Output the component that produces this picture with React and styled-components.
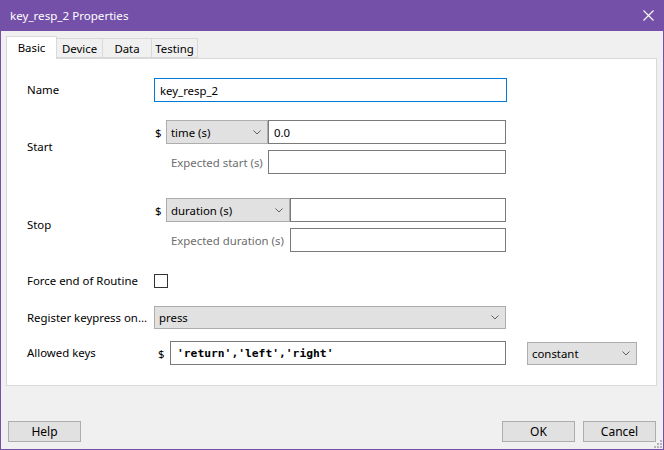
import React from "react";
import styled, { createGlobalStyle } from "styled-components";

const Global = createGlobalStyle`
  html, body { margin: 0; padding: 0; background: #f0f0f0; }
  body { font-family: "Noto Sans", "Segoe UI", sans-serif; font-size: 11.4px; color: #000; }
`;

const Window = styled.div`
  position: relative;
  width: 664px;
  height: 450px;
  box-sizing: border-box;
  display: flex;
  flex-direction: column;
  background: #f0f0f0;
  border: 1px solid #7450a8;
  border-top: none;
`;

const TitleBar = styled.div`
  height: 31px;
  margin: 0 -1px;
  background: #7450a8;
  color: #fff;
  display: flex;
  align-items: center;
  justify-content: space-between;
  padding: 0 10px 0 10px;
  font-size: 11.6px;
`;

const Body = styled.div`
  flex: 1;
  display: flex;
  flex-direction: column;
  padding: 5px 6px 0 5px;
`;

const TabBar = styled.div`
  display: flex;
  align-items: flex-end;
  height: 22px;
`;

const Tab = styled.div`
  box-sizing: border-box;
  width: ${(p) => p.$w}px;
  height: ${(p) => (p.$active ? 23 : 20)}px;
  margin-bottom: ${(p) => (p.$active ? -1 : 0)}px;
  display: flex;
  align-items: center;
  justify-content: center;
  padding-bottom: ${(p) => (p.$active ? 2 : 0)}px;
  background: ${(p) => (p.$active ? "#fff" : "#f0f0f0")};
  border: 1px solid #d9d9d9;
  border-bottom: ${(p) => (p.$active ? "none" : "1px solid #d9d9d9")};
  border-left: ${(p) => (p.$first || p.$active ? "1px solid #d9d9d9" : "none")};
  position: relative;
  z-index: ${(p) => (p.$active ? 1 : 0)};
`;

const Panel = styled.div`
  box-sizing: border-box;
  height: 328px;
  background: #fff;
  border: 1px solid #d9d9d9;
  padding: 0 0 0 20px;
  display: flex;
  flex-direction: column;
`;

const Row = styled.div`
  display: flex;
  align-items: center;
  margin-top: ${(p) => p.$top}px;
`;

const Label = styled.div`
  width: 127px;
  line-height: 14px;
  flex-shrink: 0;
  white-space: nowrap;
`;

const TextBox = styled.div`
  box-sizing: border-box;
  width: ${(p) => p.$w}px;
  height: ${(p) => p.$h || 24}px;
  border: 1px solid ${(p) => (p.$focus ? "#0078d7" : "#7a7a7a")};
  background: #fff;
  display: flex;
  align-items: center;
  padding-left: ${(p) => (p.$mono ? 6 : 5)}px;
  font-family: ${(p) => (p.$mono ? '"DejaVu Sans Mono", "Liberation Mono", monospace' : "inherit")};
  font-weight: ${(p) => (p.$mono ? 700 : 400)};
  font-size: ${(p) => (p.$mono ? "11.3px" : "11.4px")};
`;

const Combo = styled.div`
  box-sizing: border-box;
  width: ${(p) => p.$w}px;
  height: ${(p) => p.$h || 24}px;
  border: 1px solid #adadad;
  background: #e1e1e1;
  display: flex;
  align-items: center;
  justify-content: space-between;
  padding: 0 6px 0 4px;
`;

const Dollar = styled.div`
  width: ${(p) => p.$w}px;
  padding-left: ${(p) => p.$pad}px;
  box-sizing: border-box;
  flex-shrink: 0;
`;

const TimeGrid = styled.div`
  display: grid;
  grid-template-columns: 12px ${(p) => p.$combo}px ${(p) => 352 - p.$combo}px;
  grid-template-rows: 24px 24px;
  row-gap: 6px;
  align-items: center;
`;

const Hint = styled.div`
  grid-column: 2;
  color: #6d6d6d;
  padding-left: 5px;
  white-space: nowrap;
`;

const Check = styled.div`
  box-sizing: border-box;
  width: 14px;
  height: 14px;
  border: 1px solid #333;
  background: #fff;
`;

const Spacer = styled.div`
  width: ${(p) => p.$w}px;
  flex-shrink: 0;
`;

const Footer = styled.div`
  margin-top: auto;
  display: flex;
  align-items: center;
  padding: 0 1px 7px 2px;
`;

const Button = styled.div`
  box-sizing: border-box;
  width: 73px;
  height: 21px;
  border: 1px solid #adadad;
  background: #e1e1e1;
  display: flex;
  align-items: center;
  justify-content: center;
  font-size: 12px;
  margin-left: ${(p) => p.$ml || 0}px;
`;

const Grip = styled.svg`
  position: absolute;
  right: 1px;
  bottom: 1px;
`;

const Chevron = () => (
  <svg width="8" height="5" viewBox="0 0 8 5">
    <polyline points="0.5,0.5 4,4 7.5,0.5" fill="none" stroke="#606060" strokeWidth="1" />
  </svg>
);

const Select = ({ w, h, children }) => (
  <Combo $w={w} $h={h}>
    <span>{children}</span>
    <Chevron />
  </Combo>
);

const App = () => (
  <>
    <Global />
    <Window>
      <TitleBar>
        <span>key_resp_2 Properties</span>
        <svg width="11" height="11" viewBox="0 0 11 11">
          <path d="M0.5 0.5 L10.5 10.5 M10.5 0.5 L0.5 10.5" stroke="#fff" strokeWidth="1.1" />
        </svg>
      </TitleBar>
      <Body>
        <TabBar>
          <Tab $active $first $w={51}>Basic</Tab>
          <Tab $w={46}>Device</Tab>
          <Tab $w={49}>Data</Tab>
          <Tab $w={46}>Testing</Tab>
        </TabBar>
        <Panel>
          <Row $top={19}>
            <Label>Name</Label>
            <TextBox $w={353} $focus>key_resp_2</TextBox>
          </Row>
          <Row $top={18}>
            <Label>Start</Label>
            <TimeGrid $combo={102}>
              <Dollar $w={12} $pad={1}>$</Dollar>
              <Select w={102}>time (s)</Select>
              <TextBox $w={238}>0.0</TextBox>
              <Hint>Expected start (s)</Hint>
              <TextBox $w={238} />
            </TimeGrid>
          </Row>
          <Row $top={24}>
            <Label>Stop</Label>
            <TimeGrid $combo={124}>
              <Dollar $w={12} $pad={1}>$</Dollar>
              <Select w={124}>duration (s)</Select>
              <TextBox $w={216} />
              <Hint>Expected duration (s)</Hint>
              <TextBox $w={216} />
            </TimeGrid>
          </Row>
          <Row $top={22}>
            <Label>Force end of Routine</Label>
            <Check />
          </Row>
          <Row $top={18}>
            <Label>Register keypress on...</Label>
            <Select w={352} h={23}>press</Select>
          </Row>
          <Row $top={12}>
            <Label>Allowed keys</Label>
            <Dollar $w={16} $pad={4}>$</Dollar>
            <TextBox $w={336} $mono>'return','left','right'</TextBox>
            <Spacer $w={21} />
            <Select w={110} h={23}>constant</Select>
          </Row>
        </Panel>
        <Footer>
          <Button>Help</Button>
          <Button $ml={421}>OK</Button>
          <Button $ml={8}>Cancel</Button>
        </Footer>
      </Body>
      <Grip width="8" height="8" viewBox="0 0 8 8">
        <g fill="#b4b4b4">
          <rect x="6" y="0" width="2" height="2" />
          <rect x="3" y="3" width="2" height="2" />
          <rect x="6" y="3" width="2" height="2" />
          <rect x="0" y="6" width="2" height="2" />
          <rect x="3" y="6" width="2" height="2" />
          <rect x="6" y="6" width="2" height="2" />
        </g>
      </Grip>
    </Window>
  </>
);

export default App;
